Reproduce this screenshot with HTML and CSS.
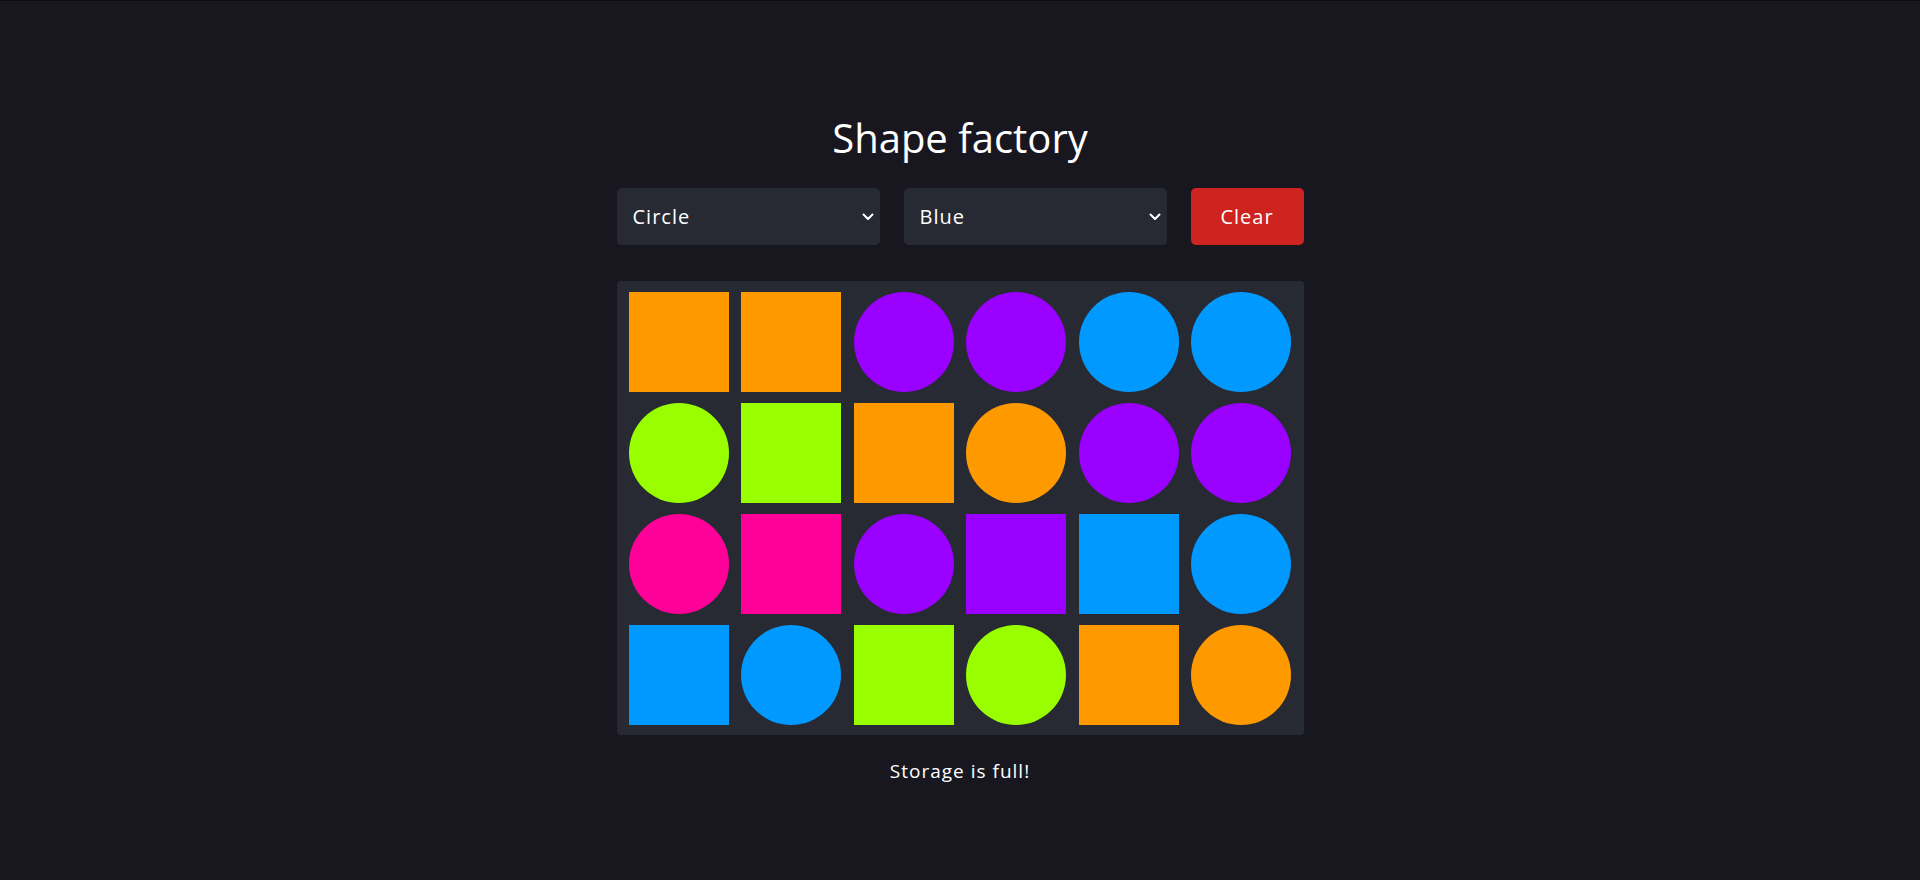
FILE: index.html
```html
<!DOCTYPE html>
<html lang="en">
<head>
<meta charset="utf-8">
<title>Shape factory</title>
<link rel="stylesheet" href="styles.css">
</head>
<body>
<main class="app">
  <h1 class="title">Shape factory</h1>
  <div class="controls">
    <div class="select-wrap">
      <select class="select">
        <option>Circle</option>
        <option>Square</option>
      </select>
      <svg class="chevron" width="12" height="8" viewBox="0 0 12 8"><path d="M1.5 1.5 L6 6 L10.5 1.5" fill="none" stroke="#fff" stroke-width="2" stroke-linecap="round" stroke-linejoin="round"/></svg>
    </div>
    <div class="select-wrap">
      <select class="select">
        <option>Blue</option>
        <option>Orange</option>
        <option>Purple</option>
        <option>Green</option>
        <option>Pink</option>
      </select>
      <svg class="chevron" width="12" height="8" viewBox="0 0 12 8"><path d="M1.5 1.5 L6 6 L10.5 1.5" fill="none" stroke="#fff" stroke-width="2" stroke-linecap="round" stroke-linejoin="round"/></svg>
    </div>
    <button class="clear">Clear</button>
  </div>
  <div class="storage">
    <div class="shape square orange"></div>
    <div class="shape square orange"></div>
    <div class="shape circle purple"></div>
    <div class="shape circle purple"></div>
    <div class="shape circle blue"></div>
    <div class="shape circle blue"></div>

    <div class="shape circle green"></div>
    <div class="shape square green"></div>
    <div class="shape square orange"></div>
    <div class="shape circle orange"></div>
    <div class="shape circle purple"></div>
    <div class="shape circle purple"></div>

    <div class="shape circle pink"></div>
    <div class="shape square pink"></div>
    <div class="shape circle purple"></div>
    <div class="shape square purple"></div>
    <div class="shape square blue"></div>
    <div class="shape circle blue"></div>

    <div class="shape square blue"></div>
    <div class="shape circle blue"></div>
    <div class="shape square green"></div>
    <div class="shape circle green"></div>
    <div class="shape square orange"></div>
    <div class="shape circle orange"></div>
  </div>
  <p class="message">Storage is full!</p>
</main>
</body>
</html>
```
FILE: styles.css
```css
* { box-sizing: border-box; }

html, body {
  margin: 0;
  height: 100%;
}

body {
  background: #18171f;
  border-top: 1px solid #0c0c10;
  font-family: "Open Sans", "Liberation Sans", sans-serif;
  color: #ffffff;
}

.app {
  display: flex;
  flex-direction: column;
  align-items: center;
  padding-top: 113px;
}

.title {
  margin: 0 0 26px;
  font-size: 40px;
  line-height: 48px;
  font-weight: 400;
  color: #ffffff;
}

.controls {
  display: flex;
  gap: 24px;
  width: 687px;
  margin-bottom: 36px;
}

.select-wrap {
  position: relative;
  width: 263px;
  height: 57px;
}

.select {
  appearance: none;
  -webkit-appearance: none;
  width: 100%;
  height: 100%;
  background: #272a33;
  color: #ffffff;
  border: none;
  border-radius: 5px;
  padding: 0 16px;
  font-family: inherit;
  font-size: 20px;
  letter-spacing: 1px;
  outline: none;
}

.chevron {
  position: absolute;
  right: 6px;
  top: 25px;
  pointer-events: none;
}

.clear {
  width: 113px;
  height: 57px;
  border: none;
  border-radius: 5px;
  background: #cf2320;
  color: #ffffff;
  font-family: inherit;
  font-size: 20px;
  font-weight: 500;
  letter-spacing: 1px;
}

.storage {
  width: 687px;
  background: #272a33;
  border-radius: 4px;
  padding: 11px 12px 10px;
  display: grid;
  grid-template-columns: repeat(6, 100px);
  justify-content: space-between;
  row-gap: 11px;
}

.shape {
  width: 100px;
  height: 100px;
}

.circle { border-radius: 50%; }

.orange { background: #ff9900; }
.purple { background: #9900ff; }
.blue { background: #0099ff; }
.green { background: #99ff00; }
.pink { background: #ff0099; }

.message {
  margin: 24px 0 0;
  font-size: 19px;
  line-height: 24px;
  letter-spacing: 1px;
  color: #ffffff;
}
```
